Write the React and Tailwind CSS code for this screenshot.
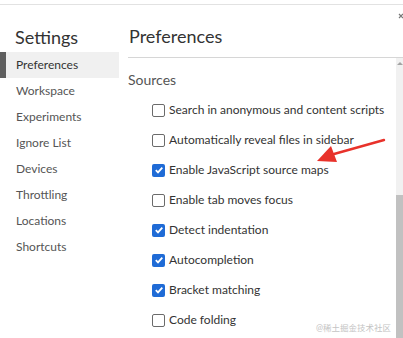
import React from "react";

const navItems = [
  "Preferences",
  "Workspace",
  "Experiments",
  "Ignore List",
  "Devices",
  "Throttling",
  "Locations",
  "Shortcuts",
];

const options = [
  { label: "Search in anonymous and content scripts", checked: false },
  { label: "Automatically reveal files in sidebar", checked: false },
  { label: "Enable JavaScript source maps", checked: true },
  { label: "Enable tab moves focus", checked: false },
  { label: "Detect indentation", checked: true },
  { label: "Autocompletion", checked: true },
  { label: "Bracket matching", checked: true },
  { label: "Code folding", checked: false },
];

function Checkbox({ checked }) {
  if (checked) {
    return (
      <span className="flex h-[13px] w-[13px] shrink-0 items-center justify-center rounded-[2px] bg-[#1f6bd6]">
        <svg width="10" height="10" viewBox="0 0 10 10">
          <path d="M1.8 5.2 L4 7.4 L8.3 2.6" fill="none" stroke="#fff" strokeWidth="1.8" />
        </svg>
      </span>
    );
  }
  return (
    <span className="h-[13px] w-[13px] shrink-0 rounded-[2px] border border-[#6b6b6b] bg-white" />
  );
}

function App() {
  return (
    <div
      className="relative h-[338px] w-[403px] overflow-hidden bg-white text-[#333]"
      style={{ fontFamily: 'Lato, "Noto Sans CJK SC", sans-serif' }}
    >
      <div className="mt-[4px] flex h-[334px] border-t border-[#e2e2e2]">
        {/* sidebar */}
        <div className="w-[128px] shrink-0">
          <div className="h-[47px] pl-[15px] pt-[20px] text-[18px] leading-[24px] text-[#333]">
            Settings
          </div>
          <ul>
            {navItems.map((item, i) => (
              <li
                key={item}
                className={
                  i === 0
                    ? "flex h-[26px] w-[119px] items-center border-l-[6px] border-[#5f5f5f] bg-[#f0f0f0] pl-[10px] text-[12px] text-[#333]"
                    : "flex h-[26px] w-[119px] items-center pl-[16px] text-[12px] text-[#555]"
                }
              >
                {item}
              </li>
            ))}
          </ul>
        </div>

        {/* content */}
        <div className="flex min-w-0 flex-1 flex-col">
          <div className="flex h-[53px] items-end border-b border-[#d6d6d6] pb-[9px] pl-[1px] text-[18px] leading-[24px] text-[#333]">
            Preferences
          </div>
          <div className="flex min-h-0 flex-1">
            <div className="flex-1">
              <div className="pt-[12px] text-[14px] leading-[20px] text-[#555]">Sources</div>
              <div className="mt-[5px] flex flex-col pl-[24px]">
                {options.map((o) => (
                  <label key={o.label} className="flex h-[30px] items-center gap-[4px] whitespace-nowrap text-[12px] text-[#333]">
                    <Checkbox checked={o.checked} />
                    <span>{o.label}</span>
                  </label>
                ))}
              </div>
            </div>
            {/* scrollbar */}
            <div className="flex w-[7px] shrink-0 flex-col bg-[#f1f1f1]">
              <div className="flex h-[10px] items-center justify-center">
                <span className="h-0 w-0 border-x-[3px] border-b-[3px] border-x-transparent border-b-[#a3a3a3]" />
              </div>
              <div className="h-[127px]" />
              <div className="flex-1 bg-[#c1c1c1]" />
            </div>
          </div>
        </div>
      </div>

      {/* close icon, cut off at the edge */}
      <svg className="absolute left-[398px] top-[13px]" width="5" height="6" viewBox="0 0 5 6">
        <path d="M1 1 L5 5 M5 1 L1 5" stroke="#777" strokeWidth="1.2" />
      </svg>

      {/* red annotation arrow */}
      <svg className="absolute left-0 top-0" width="403" height="338" viewBox="0 0 403 338">
        <path d="M384 140 L334 154" stroke="#e8322b" strokeWidth="2.4" strokeLinecap="round" />
        <path d="M317 161 L331 146 L337 162 Z" fill="#e8322b" />
      </svg>

      {/* watermark */}
      <div className="absolute left-[316px] top-[322px] whitespace-nowrap text-[8.5px] leading-[12px] text-[#c4c4c4]">
        @稀土掘金技术社区
      </div>
    </div>
  );
}

export default App;
